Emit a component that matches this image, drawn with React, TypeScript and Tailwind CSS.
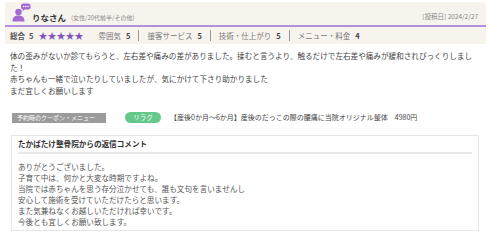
const FONT = "font-['Noto_Sans_CJK_JP','Noto_Sans',sans-serif]";

const ratings = [
  { label: '雰囲気', value: 5 },
  { label: '接客サービス', value: 5 },
  { label: '技術・仕上がり', value: 5 },
  { label: 'メニュー・料金', value: 4 },
];

const replyLines = [
  'ありがとうございました。',
  '子育て中は、何かと大変な時期ですよね。',
  '当院では赤ちゃんを思う存分泣かせても、誰も文句を言いませんし',
  '安心して施術を受けていただけたらと思います。',
  'また気兼ねなくお越しいただければ幸いです。',
  '今後とも宜しくお願い致します。',
];

function Avatar() {
  return (
    <svg width="19" height="19" viewBox="0 0 19 19" className="shrink-0">
      <circle cx="6.5" cy="9" r="3.2" fill="#a36ad2" />
      <path d="M0.5 18.5 C0.5 14 3 12.6 6.5 12.6 C10 12.6 12.5 14 12.5 18.5 Z" fill="#a36ad2" />
      <rect x="9" y="0.5" width="9.5" height="6" rx="2.2" fill="#a36ad2" />
      <path d="M11 6 L10.5 8.5 L13 6 Z" fill="#a36ad2" />
      <circle cx="11.6" cy="3.5" r="0.8" fill="#fff" />
      <circle cx="13.8" cy="3.5" r="0.8" fill="#fff" />
      <circle cx="16" cy="3.5" r="0.8" fill="#fff" />
    </svg>
  );
}

export default function App() {
  return (
    <div className={`w-[500px] h-[242px] bg-white overflow-hidden ${FONT}`}>
      <div className="pl-[5px] pt-[2px] w-[486px]">
        {/* Header */}
        <div className="bg-[#f7f4ed] h-[25px] border-b-2 border-[#b58fd9] flex items-end justify-between pl-[7px] pr-[8px] pb-[3px]">
          <div className="flex items-end">
            <Avatar />
            <span className="ml-[1px] text-[8.5px] font-bold text-[#333] leading-none mb-[1px]">りなさん</span>
            <span className="ml-[5px] text-[6px] text-[#888] leading-none mb-[1px]">(女性/20代前半/その他)</span>
          </div>
          <span className="text-[6.5px] text-[#888] leading-none mb-[3px]">[投稿日] 2024/2/27</span>
        </div>

        {/* Ratings */}
        <div className="bg-[#f7f4ed] h-[17px] flex items-center pl-[5px] text-[7.5px] leading-none">
          <span className="text-[#555] font-bold">総合</span>
          <span className="ml-[4px] text-[#555] font-bold">5</span>
          <span className="ml-[5px] text-[#7f54bd] text-[9px] tracking-[0px]">★★★★★</span>
          <div className="ml-[15px] flex items-center">
            {ratings.map((r, i) => (
              <div key={r.label} className="flex items-center">
                {i > 0 && <span className="w-px h-[11px] bg-[#999] mx-[8px]" />}
                <span className="text-[#777]">{r.label}</span>
                <span className="ml-[5px] text-[#444] font-bold">{r.value}</span>
              </div>
            ))}
          </div>
        </div>

        {/* Body */}
        <div className="pl-[5px] pr-[4px] pt-[6px] text-[7.6px] leading-[11.5px] text-[#444]">
          <p>体の歪みがないか診てもらうと、左右差や痛みの差がありました。揉むと言うより、触るだけで左右差や痛みが緩和されびっくりしました！</p>
          <p>赤ちゃんも一緒で泣いたりしていましたが、気にかけて下さり助かりました</p>
          <p>まだ宜しくお願いします</p>
        </div>

        {/* Coupon */}
        <div className="flex items-center mt-[16px] pl-[7px]">
          <span className="bg-[#9b9b9b] text-white text-[6px] leading-none h-[10px] w-[94px] flex items-center pl-[5px]">予約時のクーポン・メニュー</span>
          <span className="ml-[19px] bg-[#66c98c] text-white text-[6.5px] leading-none h-[11px] w-[36px] rounded-full flex items-center justify-center">リラク</span>
          <span className="ml-[9px] text-[7px] text-[#444] leading-none">【産後0か月～6か月】産後のだっこの際の腰痛に当院オリジナル整体　4980円</span>
        </div>

        {/* Reply */}
        <div className="ml-[6px] mt-[12px] w-[468px] h-[96px] border border-[#e6e6e6] px-[6px] pt-[4px]">
          <div className="text-[7.6px] text-[#333] font-bold leading-none pb-[4px] border-b-2 border-[#e8e8e8]">
            たかばたけ整骨院からの返信コメント
          </div>
          <div className="pt-[7px] text-[7.6px] leading-[11px] text-[#555]">
            {replyLines.map((l) => (
              <p key={l}>{l}</p>
            ))}
          </div>
        </div>
      </div>
    </div>
  );
}
